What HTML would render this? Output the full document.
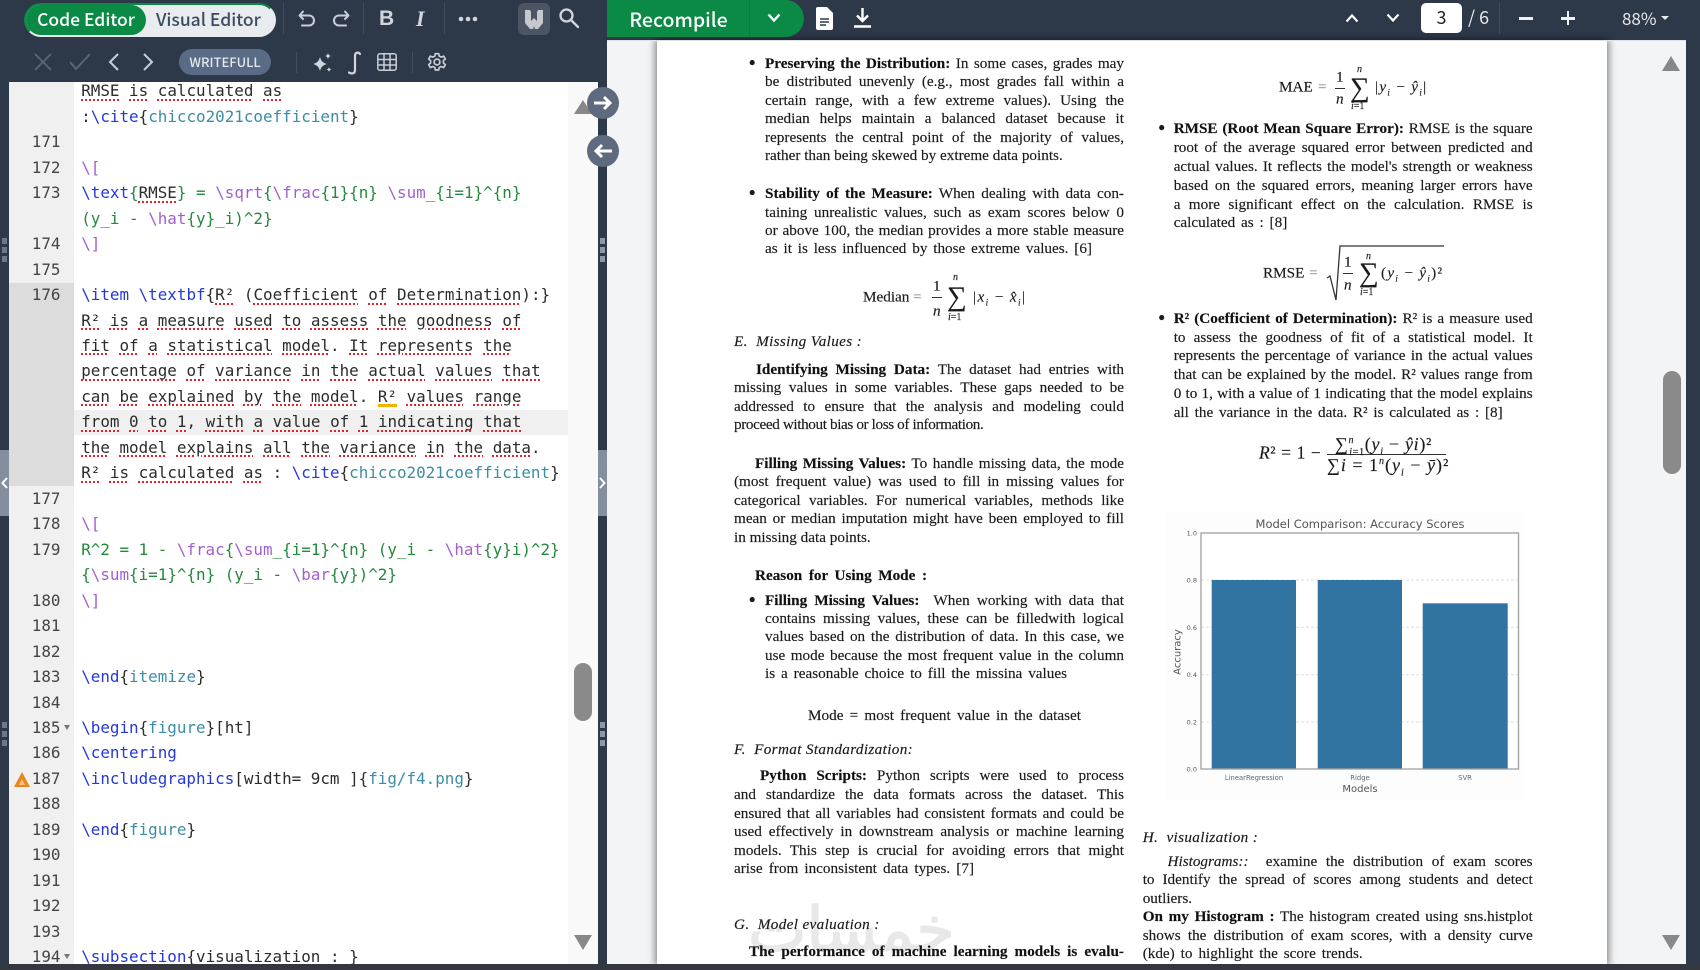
<!DOCTYPE html>
<html><head><meta charset="utf-8">
<style>
html,body{margin:0;padding:0;width:1700px;height:970px;overflow:hidden;background:#2d3849}
*{box-sizing:border-box}
.abs{position:absolute}
#root{position:absolute;left:0;top:0;width:1700px;height:970px;overflow:hidden;background:#2d3849;filter:blur(.35px)}
.ui{font-family:"Noto Sans CJK JP","Liberation Sans",sans-serif}
.ico{position:absolute;overflow:visible}
.sep{position:absolute;width:1px;background:#414d60}
#ed{position:absolute;left:9px;top:82px;width:589px;height:882px;background:#fff;overflow:hidden}
#gut{position:absolute;left:0;top:0;width:64.5px;height:882px;background:#f0f0f0}
#gact{position:absolute;left:0;top:201px;width:64.5px;height:203px;background:#dcdcdc}
#lact{position:absolute;left:65px;top:328px;width:494px;height:25px;background:#f0f0f0}
#trk{position:absolute;left:559px;top:0;width:30px;height:882px;background:#f9f9f9}
.rows{position:absolute;top:-3.73px;height:885.7px;overflow:hidden;font:15.9px/25.47px "DejaVu Sans Mono","Liberation Mono",monospace;color:#2c2c2c}
.rows div{height:25.47px;white-space:pre}
#nums{left:0;width:51.5px;text-align:right;color:#444}
#code{left:72.2px;width:490px}
.c{color:#2438dc}.a{color:#3c8da6}.m{color:#a35fcf}.g{color:#23893c}
.s{text-decoration:underline dotted #e5202a 2px;text-underline-offset:3px}
.y{text-decoration:underline solid #f0b400 3px;text-underline-offset:2px}
#pdf{position:absolute;left:607px;top:40px;width:1079px;height:924px;background:#f3f4f6;overflow:hidden}
#page{position:absolute;left:657px;top:41px;width:950px;height:923px;background:#fff;box-shadow:0 0 7px 2px rgba(0,0,0,.45)}
#txt{position:absolute;left:0;top:0;width:1700px;height:964px;overflow:hidden;font:15.2px/18px "Liberation Serif",serif;color:#1a1a1a;-webkit-text-stroke:.15px #1a1a1a}
#txt .j,#txt .n{position:absolute;transform:translateY(calc(-50% + 1px))}
#txt .e{position:absolute;transform:translateY(-50%)}
.j{text-align:justify;text-align-last:justify;height:18px;overflow:hidden}
.n{white-space:nowrap}
.e{white-space:nowrap;line-height:1}
.L{left:765px;width:359px}.F{left:734px;width:390px}.R{left:1173.7px;width:359px}.H{left:1142.7px;width:390px}
.t{font-style:italic;letter-spacing:.35px}
#txt i{font-style:italic}
#txt b{font-weight:bold;color:#111}
.sm{font-size:10px}
.sg{font-size:27.5px;font-family:"Liberation Serif",serif;line-height:1}
.dot{font-size:21px}
.bar{position:absolute;height:1px;background:#333}
.btn{position:absolute;border-radius:50%;background:#5e6a7d}
.tri{position:absolute;width:0;height:0;border-left:9.5px solid transparent;border-right:9.5px solid transparent}
sub.u{font-size:9px;line-height:0}
</style></head><body>
<div id="root">

<!-- toolbar left -->
<div class="abs" style="left:24px;top:3px;width:252px;height:34px;background:#e9ecef;border-radius:17px;border:2px solid #0b8a45;border-color:#0b8a45 #e9ecef #e9ecef #0b8a45"></div>
<div class="abs ui" style="left:26px;top:5px;width:120px;height:30px;background:#0b8a45;border-radius:15px;color:#fff;font-size:17.5px;font-weight:500;line-height:29px;text-align:center">Code Editor</div>
<div class="abs ui" style="left:156px;top:5px;color:#3d4b60;font-size:17.5px;font-weight:500;line-height:29px">Visual Editor</div>
<div class="sep" style="left:283px;top:3px;height:31px"></div>
<div class="sep" style="left:363px;top:3px;height:31px"></div>
<div class="sep" style="left:444px;top:3px;height:31px"></div>
<svg class="ico" style="left:297px;top:9px" width="20" height="20" viewBox="0 0 20 20" fill="none" stroke="#c9ced6" stroke-width="2" stroke-linecap="round" stroke-linejoin="round"><path d="M6 2.5 2.5 6.5 6 10M3 6.5h9a4.5 4.5 0 0 1 0 10H5"/></svg>
<svg class="ico" style="left:331px;top:9px" width="20" height="20" viewBox="0 0 20 20" fill="none" stroke="#c9ced6" stroke-width="2" stroke-linecap="round" stroke-linejoin="round"><path d="M14 2.5 17.5 6.5 14 10M17 6.5H8a4.5 4.5 0 0 0 0 10h7"/></svg>
<div class="abs" style="left:379px;top:4px;color:#d2d6dc;font:bold 21px/30px 'Liberation Sans',sans-serif">B</div>
<div class="abs" style="left:416px;top:4px;color:#d2d6dc;font:italic bold 22px/30px 'Liberation Serif',serif">I</div>
<svg class="ico" style="left:458px;top:15px" width="20" height="8" viewBox="0 0 20 8" fill="#d2d6dc"><circle cx="3" cy="4" r="2.3"/><circle cx="10" cy="4" r="2.3"/><circle cx="17" cy="4" r="2.3"/></svg>
<div class="abs" style="left:518px;top:3px;width:32px;height:32px;background:#4c5564;border-radius:6px"></div>
<svg class="ico" style="left:523px;top:8px" width="22" height="22" viewBox="0 0 22 22" fill="#c6c9ce"><path d="M2 2h5l1 2v9l3-3 3 3V4l1-2h5v13l-5 6h-3l-1-3-1 3H7l-5-6z"/></svg>
<svg class="ico" style="left:558px;top:7px" width="22" height="22" viewBox="0 0 22 22" fill="none" stroke="#d2d6dc" stroke-width="2.3" stroke-linecap="round"><circle cx="8.5" cy="8.5" r="6"/><path d="M13 13l7 7"/></svg>

<!-- row 2 -->
<svg class="ico" style="left:34px;top:53px" width="18" height="18" viewBox="0 0 18 18" fill="none" stroke="#5c6676" stroke-width="1.8"><path d="M1 1l16 16M17 1 1 17"/></svg>
<svg class="ico" style="left:69px;top:53px" width="22" height="18" viewBox="0 0 22 18" fill="none" stroke="#5c6676" stroke-width="1.8"><path d="M1 9l6 7L21 1"/></svg>
<svg class="ico" style="left:108px;top:53px" width="12" height="18" viewBox="0 0 12 18" fill="none" stroke="#c9ced6" stroke-width="2"><path d="M10 1 2 9l8 8"/></svg>
<svg class="ico" style="left:142px;top:53px" width="12" height="18" viewBox="0 0 12 18" fill="none" stroke="#c9ced6" stroke-width="2"><path d="M2 1l8 8-8 8"/></svg>
<div class="abs ui" style="left:179px;top:49px;width:92px;height:26px;background:#5a6b85;border-radius:13px;color:#e4e8ee;font-size:13px;line-height:26px;text-align:center;font-weight:500">WRITEFULL</div>
<div class="sep" style="left:296px;top:52px;height:21px"></div>
<svg class="ico" style="left:311px;top:52px" width="22" height="22" viewBox="0 0 22 22" fill="#d2d6dc"><path d="M9 5c1 4 3 6 7 7-4 1-6 3-7 7-1-4-3-6-7-7 4-1 6-3 7-7zM17 1c.4 1.7 1.3 2.6 3 3-1.7.4-2.6 1.3-3 3-.4-1.7-1.3-2.6-3-3 1.7-.4 2.6-1.3 3-3zM18 15c.3 1.4 1 2.1 2.5 2.5-1.5.4-2.2 1.1-2.5 2.5-.3-1.4-1-2.1-2.5-2.5 1.5-.4 2.2-1.1 2.5-2.5z"/></svg>
<svg class="ico" style="left:347px;top:51px" width="15" height="24" viewBox="0 0 15 24" fill="none" stroke="#d2d6dc" stroke-width="2.2" stroke-linecap="round"><path d="M13 3c-1.5-2-5-2-5 2v14c0 4-3.5 4-6 2.5"/></svg>
<svg class="ico" style="left:377px;top:53px" width="20" height="18" viewBox="0 0 20 18" fill="none" stroke="#c9ced6" stroke-width="1.5"><rect x=".8" y=".8" width="18.4" height="16.4" rx="2"/><path d="M7 1v16M13 1v16M1 6.5h18M1 12h18"/></svg>
<div class="sep" style="left:412px;top:52px;height:21px"></div>
<svg class="ico" style="left:427px;top:52px" width="20" height="20" viewBox="0 0 24 24" fill="none" stroke="#c9ced6" stroke-width="2"><circle cx="12" cy="12" r="3.5"/><path d="M10 2h4l.7 3 2.5 1.2 2.8-1.3 2 3.5-2.3 2v2.8l2.3 2-2 3.5-2.8-1.3-2.5 1.2-.7 3h-4l-.7-3-2.5-1.2L4 18.700l-2-3.500 2.300-2v-2.800L2 8.400l2-3.500 2.800 1.300L9.300 5z" stroke-linejoin="round"/></svg>

<!-- editor -->
<div id="ed">
<div id="trk"></div>
<div id="gut"></div><div id="gact"></div><div id="lact"></div>
<div class="rows" id="nums"><div> </div><div> </div><div>171</div><div>172</div><div>173</div><div> </div><div>174</div><div>175</div><div>176</div><div> </div><div> </div><div> </div><div> </div><div> </div><div> </div><div> </div><div>177</div><div>178</div><div>179</div><div> </div><div>180</div><div>181</div><div>182</div><div>183</div><div>184</div><div>185</div><div>186</div><div>187</div><div>188</div><div>189</div><div>190</div><div>191</div><div>192</div><div>193</div><div>194</div></div>
<div class="rows" id="code">
<div><span class="s">RMSE</span> <span class="s">is</span> <span class="s">calculated</span> <span class="s">as</span></div>
<div>:<span class="c">\cite</span>{<span class="a">chicco2021coefficient</span>}</div>
<div> </div>
<div><span class="m">\[</span></div>
<div><span class="c">\text</span><span class="g">{</span><span class="s">RMSE</span><span class="g">}</span> <span class="g">=</span> <span class="m">\sqrt</span><span class="g">{</span><span class="m">\frac</span><span class="g">{1}{n}</span> <span class="m">\sum</span><span class="g">_{i=1}^{n}</span></div>
<div><span class="g">(y_i - </span><span class="m">\hat</span><span class="g">{y}_i)^2}</span></div>
<div><span class="m">\]</span></div>
<div> </div>
<div><span class="c">\item</span> <span class="c">\textbf</span>{<span class="s">R²</span> (<span class="s">Coefficient</span> <span class="s">of</span> <span class="s">Determination</span>):}</div>
<div><span class="s">R²</span> <span class="s">is</span> <span class="s">a</span> <span class="s">measure</span> <span class="s">used</span> <span class="s">to</span> <span class="s">assess</span> <span class="s">the</span> <span class="s">goodness</span> <span class="s">of</span></div>
<div><span class="s">fit</span> <span class="s">of</span> <span class="s">a</span> <span class="s">statistical</span> <span class="s">model</span>. <span class="s">It</span> <span class="s">represents</span> <span class="s">the</span></div>
<div><span class="s">percentage</span> <span class="s">of</span> <span class="s">variance</span> <span class="s">in</span> <span class="s">the</span> <span class="s">actual</span> <span class="s">values</span> <span class="s">that</span></div>
<div><span class="s">can</span> <span class="s">be</span> <span class="s">explained</span> <span class="s">by</span> <span class="s">the</span> <span class="s">model</span>. <span class="y">R²</span> <span class="s">values</span> <span class="s">range</span></div>
<div><span class="s">from</span> <span class="s">0</span> <span class="s">to</span> <span class="s">1</span>, <span class="s">with</span> <span class="s">a</span> <span class="s">value</span> <span class="s">of</span> <span class="s">1</span> <span class="s">indicating</span> <span class="s">that</span></div>
<div><span class="s">the</span> <span class="s">model</span> <span class="s">explains</span> <span class="s">all</span> <span class="s">the</span> <span class="s">variance</span> <span class="s">in</span> <span class="s">the</span> <span class="s">data</span>.</div>
<div><span class="s">R²</span> <span class="s">is</span> <span class="s">calculated</span> <span class="s">as</span> : <span class="c">\cite</span>{<span class="a">chicco2021coefficient</span>}</div>
<div> </div>
<div><span class="m">\[</span></div>
<div><span class="g">R^2 = 1 - </span><span class="m">\frac</span><span class="g">{</span><span class="m">\sum</span><span class="g">_{i=1}^{n} (y_i - </span><span class="m">\hat</span><span class="g">{y}i)^2}</span></div>
<div><span class="g">{</span><span class="m">\sum</span><span class="g">{i=1}^{n} (y_i - </span><span class="m">\bar</span><span class="g">{y})^2}</span></div>
<div><span class="m">\]</span></div>
<div> </div>
<div> </div>
<div><span class="c">\end</span>{<span class="a">itemize</span>}</div>
<div> </div>
<div><span class="c">\begin</span>{<span class="a">figure</span>}[ht]</div>
<div><span class="c">\centering</span></div>
<div><span class="c">\includegraphics</span>[width= 9cm ]{<span class="a">fig/f4.png</span>}</div>
<div> </div>
<div><span class="c">\end</span>{<span class="a">figure</span>}</div>
<div> </div>
<div> </div>
<div> </div>
<div> </div>
<div><span class="c">\subsection</span>{visualization : }</div>
</div>
<!-- fold marks -->
<div class="abs" style="left:55px;top:643px;border-left:3px solid transparent;border-right:3px solid transparent;border-top:5px solid #777"></div>
<div class="abs" style="left:55px;top:872px;border-left:3px solid transparent;border-right:3px solid transparent;border-top:5px solid #777"></div>
<svg class="ico" style="left:5px;top:690px" width="16" height="15" viewBox="0 0 16 15"><path d="M8 0 16 15H0z" fill="#e8871e"/><path d="M8 7l3 6H5z" fill="#f5c37f"/></svg>
<!-- editor scrollbar -->
<div class="tri" style="left:564.5px;top:18px;border-bottom:14px solid #888"></div>
<div class="abs" style="left:565px;top:581px;width:18px;height:58px;background:#8a8a8a;border-radius:9px"></div>
<div class="tri" style="left:564.5px;top:853px;border-top:15px solid #888"></div>
</div>

<!-- collapse bars -->
<div class="abs" style="left:0;top:450px;width:9px;height:66px;background:#848e9c"></div>
<div class="abs" style="left:598px;top:450px;width:9px;height:66px;background:#848e9c"></div>
<svg class="ico" style="left:1px;top:477px" width="7" height="12" viewBox="0 0 7 12" fill="none" stroke="#fff" stroke-width="2"><path d="M6 1 1.5 6 6 11"/></svg>
<svg class="ico" style="left:599px;top:477px" width="7" height="12" viewBox="0 0 7 12" fill="none" stroke="#fff" stroke-width="2"><path d="M1 1l4.5 5L1 11"/></svg>
<!-- handles -->
<svg class="ico" style="left:2px;top:238px" width="6" height="28" fill="#6d7888"><rect width="5" height="6"/><rect y="9" width="5" height="6"/><rect y="18" width="5" height="6"/></svg>
<svg class="ico" style="left:600px;top:238px" width="6" height="28" fill="#8d97a6"><rect width="5" height="6"/><rect y="9" width="5" height="6"/><rect y="18" width="5" height="6"/></svg>
<svg class="ico" style="left:2px;top:722px" width="6" height="28" fill="#6d7888"><rect width="5" height="6"/><rect y="9" width="5" height="6"/><rect y="18" width="5" height="6"/></svg>
<svg class="ico" style="left:600px;top:722px" width="6" height="28" fill="#8d97a6"><rect width="5" height="6"/><rect y="9" width="5" height="6"/><rect y="18" width="5" height="6"/></svg>

<!-- pdf -->
<div id="pdf"></div>
<div id="page"></div>
<div class="abs" style="left:607px;top:40px;width:1079px;height:1px;background:#dfe1e4"></div>
<!-- recompile -->
<div class="abs" style="left:607px;top:0;width:197px;height:37px;background:#0b8a45;border-radius:0 19px 19px 0"></div>
<div class="abs" style="left:749px;top:0;width:1px;height:37px;background:#0a7a3d"></div>
<div class="abs ui" style="left:607px;top:0;width:143px;text-align:center;color:#fff;font-size:19.5px;font-weight:500;line-height:37px">Recompile</div>
<svg class="ico" style="left:767px;top:13px" width="14" height="10" viewBox="0 0 14 10" fill="none" stroke="#fff" stroke-width="2.4"><path d="M1.5 1.5 7 7.5l5.5-6"/></svg>
<svg class="ico" style="left:816px;top:7px" width="17" height="23" viewBox="0 0 17 23"><path d="M2 0h9l6 6v15a2 2 0 0 1-2 2H2a2 2 0 0 1-2-2V2a2 2 0 0 1 2-2z" fill="#fff"/><path d="M4 12h9M4 15h9M4 18h6" stroke="#2d3849" stroke-width="1.5"/></svg>
<svg class="ico" style="left:853px;top:8px" width="19" height="20" viewBox="0 0 19 20" fill="none" stroke="#fff" stroke-width="2.4"><path d="M9.5 0v12M4 7.5l5.5 5.5L15 7.5M1 18.5h17"/></svg>
<svg class="ico" style="left:1345px;top:13px" width="14" height="10" viewBox="0 0 14 10" fill="none" stroke="#fff" stroke-width="2.2"><path d="M1.5 8.5 7 2.5l5.5 6"/></svg>
<svg class="ico" style="left:1386px;top:13px" width="14" height="10" viewBox="0 0 14 10" fill="none" stroke="#fff" stroke-width="2.2"><path d="M1.5 1.5 7 7.5l5.5-6"/></svg>
<div class="abs ui" style="left:1421px;top:3px;width:41px;height:30px;background:#fff;border-radius:5px;color:#222;font-size:18px;line-height:29px;text-align:center">3</div>
<div class="abs ui" style="left:1468px;top:3px;color:#e8eaee;font-size:18px;line-height:29px">/ 6</div>
<div class="sep" style="left:1499px;top:3px;height:31px"></div>
<div class="abs" style="left:1519px;top:17px;width:14px;height:2.5px;background:#f0f0f0"></div>
<div class="abs" style="left:1561px;top:17px;width:14px;height:2.5px;background:#f0f0f0"></div>
<div class="abs" style="left:1566.8px;top:11px;width:2.5px;height:14px;background:#f0f0f0"></div>
<div class="abs ui" style="left:1622px;top:3px;color:#e8eaee;font-size:17px;line-height:30px">88%</div>
<div class="abs" style="left:1661px;top:16px;border-left:4px solid transparent;border-right:4px solid transparent;border-top:4.5px solid #e8eaee"></div>

<!-- pdf text -->
<div id="txt">
<div class="abs" style="left:748px;top:895px;font:62px/70px 'DejaVu Sans',sans-serif;color:#e8e8e8;-webkit-text-stroke:1.5px #e8e8e8;white-space:nowrap">خمسات</div>

<div class="e dot" style="left:748.5px;top:62.7px">•</div>
<div class="j L" style="top:62.7px"><b>Preserving the Distribution:</b> In some cases, grades may</div>
<div class="j L" style="top:81.3px">be distributed unevenly (e.g., most grades fall within a</div>
<div class="j L" style="top:100px">certain range, with a few extreme values). Using the</div>
<div class="j L" style="top:118.3px">median helps maintain a balanced dataset because it</div>
<div class="j L" style="top:136.7px">represents the central point of the majority of values,</div>
<div class="n" style="left:765px;top:155px">rather than being skewed by extreme data points.</div>

<div class="e dot" style="left:748.5px;top:192.7px">•</div>
<div class="j L" style="top:192.7px"><b>Stability of the Measure:</b> When dealing with data con-</div>
<div class="j L" style="top:211.7px">taining unrealistic values, such as exam scores below 0</div>
<div class="j L" style="top:230px">or above 100, the median provides a more stable measure</div>
<div class="j" style="left:765px;width:327px;top:248.3px">as it is less influenced by those extreme values. [6]</div>

<div class="e" style="left:863px;top:296.7px">Median</div><div class="e" style="left:913px;top:296.7px;color:#777;-webkit-text-stroke:0">=</div>
<div class="e" style="left:933px;top:285.7px">1</div><div class="bar" style="left:932px;top:296.5px;width:10px"></div><div class="e" style="left:933px;top:311px"><i>n</i></div>
<div class="e sg" style="left:947px;top:296px">∑</div><div class="e sm" style="left:953px;top:278px"><i>n</i></div><div class="e sm" style="left:948px;top:318px"><i>i</i>=1</div>
<div class="e" style="left:973px;top:296.7px;letter-spacing:1.4px">|<i>x<sub class="u">i</sub></i> − <i>x̂<sub class="u">i</sub></i>|</div>

<div class="n t" style="left:734px;top:341px">E.&nbsp; Missing Values :</div>

<div class="j" style="left:756px;width:368px;top:368.6px"><b>Identifying Missing Data:</b> The dataset had entries with</div>
<div class="j F" style="top:387px">missing values in some variables. These gaps needed to be</div>
<div class="j F" style="top:405.5px">addressed to ensure that the analysis and modeling could</div>
<div class="n" style="left:734px;top:424px;letter-spacing:-.38px">proceed without bias or loss of information.</div>

<div class="j" style="left:755px;width:369px;top:463px"><b>Filling Missing Values:</b> To handle missing data, the mode</div>
<div class="j F" style="top:481.4px">(most frequent value) was used to fill in missing values for</div>
<div class="j F" style="top:499.8px">categorical variables. For numerical variables, methods like</div>
<div class="j F" style="top:518px">mean or median imputation might have been employed to fill</div>
<div class="n" style="left:734px;top:536.7px">in missing data points.</div>

<div class="j" style="left:755px;width:172px;top:574.6px"><b>Reason for Using Mode :</b></div>

<div class="e dot" style="left:748.5px;top:599.5px">•</div>
<div class="j L" style="top:599.5px"><b>Filling Missing Values:</b>&nbsp; When working with data that</div>
<div class="j L" style="top:618px">contains missing values, these can be filledwith logical</div>
<div class="j L" style="top:636.4px">values based on the distribution of data. In this case, we</div>
<div class="j L" style="top:654.8px">use mode because the most frequent value in the column</div>
<div class="j" style="left:765px;width:302px;top:673px">is a reasonable choice to fill the missina values</div>

<div class="j" style="left:808px;width:273px;top:714.5px">Mode = most frequent value in the dataset</div>

<div class="n t" style="left:734px;top:749px">F.&nbsp; Format Standardization:</div>

<div class="j" style="left:760px;width:364px;top:775px"><b>Python Scripts:</b> Python scripts were used to process</div>
<div class="j F" style="top:794.3px">and standardize the data formats across the dataset. This</div>
<div class="j F" style="top:812.7px">ensured that all variables had consistent formats and could be</div>
<div class="j F" style="top:831.3px">used effectively in downstream analysis or machine learning</div>
<div class="j F" style="top:850px">models. This step is crucial for avoiding errors that might</div>
<div class="j" style="left:734px;width:240px;top:868.3px">arise from inconsistent data types. [7]</div>

<div class="n t" style="left:734px;top:924.3px">G.&nbsp; Model evaluation :</div>
<div class="j" style="left:749px;width:375px;top:950.7px"><b>The performance of machine learning models is evalu-</b></div>

<!-- right col -->
<div class="e" style="left:1279px;top:87px">MAE</div><div class="e" style="left:1318px;top:87px;color:#777;-webkit-text-stroke:0">=</div>
<div class="e" style="left:1336px;top:77px">1</div><div class="bar" style="left:1335px;top:87.5px;width:10px"></div><div class="e" style="left:1336px;top:99px"><i>n</i></div>
<div class="e sg" style="left:1350px;top:87px">∑</div><div class="e sm" style="left:1357px;top:70px"><i>n</i></div><div class="e sm" style="left:1351px;top:107px"><i>i</i>=1</div>
<div class="e" style="left:1375px;top:87px;letter-spacing:1.3px">|<i>y<sub class="u">i</sub></i> − <i>ŷ<sub class="u">i</sub></i>|</div>

<div class="e dot" style="left:1158px;top:128.3px">•</div>
<div class="j R" style="top:128.3px"><b>RMSE (Root Mean Square Error):</b> RMSE is the square</div>
<div class="j R" style="top:147.3px">root of the average squared error between predicted and</div>
<div class="j R" style="top:166px">actual values. It reflects the model's strength or weakness</div>
<div class="j R" style="top:185px">based on the squared errors, meaning larger errors have</div>
<div class="j R" style="top:203.7px">a more significant effect on the calculation. RMSE is</div>
<div class="j" style="left:1173.7px;width:113.6px;top:222.3px">calculated as : [8]</div>

<div class="e" style="left:1263px;top:272.7px">RMSE</div><div class="e" style="left:1309px;top:272.7px;color:#777;-webkit-text-stroke:0">=</div>
<svg class="ico" style="left:1326px;top:244px" width="120" height="60" viewBox="0 0 120 60" fill="none" stroke="#333"><path d="M1 34l3-2 6 24 4-54h104" stroke-width="1.3"/></svg>
<div class="e" style="left:1344px;top:261.7px">1</div><div class="bar" style="left:1343px;top:273px;width:10px"></div><div class="e" style="left:1344px;top:285px"><i>n</i></div>
<div class="e sg" style="left:1359px;top:272px">∑</div><div class="e sm" style="left:1366px;top:256.7px"><i>n</i></div><div class="e sm" style="left:1360px;top:293px"><i>i</i>=1</div>
<div class="e" style="left:1381px;top:272.7px;letter-spacing:1.3px">(<i>y<sub class="u">i</sub></i> − <i>ŷ<sub class="u">i</sub></i>)²</div>

<div class="e dot" style="left:1158px;top:318.3px">•</div>
<div class="j R" style="top:318.3px"><b>R² (Coefficient of Determination):</b> R² is a measure used</div>
<div class="j R" style="top:337.3px">to assess the goodness of fit of a statistical model. It</div>
<div class="j R" style="top:354.5px">represents the percentage of variance in the actual values</div>
<div class="j R" style="top:374px">that can be explained by the model. R² values range from</div>
<div class="j R" style="top:392.5px">0 to 1, with a value of 1 indicating that the model explains</div>
<div class="j" style="left:1173.7px;width:329px;top:412px">all the variance in the data. R² is calculated as : [8]</div>

<div class="e" style="left:1259px;top:453px;font-size:17.5px;letter-spacing:.6px"><i>R</i>² = 1 −</div>
<div class="bar" style="left:1327px;top:454px;width:119px"></div>
<div class="e" style="left:1335px;top:444px;font-size:18px;letter-spacing:.7px">∑<sup style="font-size:10px;line-height:0"><i>n</i></sup><sub style="font-size:10px;line-height:0;margin-left:-5px"><i>i</i>=1</sub>(<i>y<sub style="font-size:10px;line-height:0">i</sub></i> − <i>ŷi</i>)²</div>
<div class="e" style="left:1327px;top:465px;font-size:18px;letter-spacing:1px">∑<i>i</i> = 1<sup style="font-size:10px;line-height:0"><i>n</i></sup>(<i>y<sub style="font-size:10px;line-height:0">i</sub></i> − <i>ȳ</i>)²</div>

<svg class="ico" style="left:1166px;top:513px;-webkit-text-stroke:0" width="358" height="286" viewBox="1166 513 358 286" font-family="DejaVu Sans,sans-serif">
<rect x="1166" y="513" width="358" height="286" fill="#fdfdfd"/>
<rect x="1201" y="533" width="317.5" height="236" fill="#fff"/>
<g stroke="#dddddd" stroke-width="1" stroke-dasharray="3 2"><path d="M1201 580h317M1201 627.3h317M1201 674.7h317M1201 722h317"/></g>
<g fill="#3274a1"><rect x="1211.7" y="580" width="84.3" height="189"/><rect x="1317.7" y="580" width="84.3" height="189"/><rect x="1422.7" y="603.3" width="85" height="165.7"/></g>
<rect x="1201" y="533" width="317.5" height="236" fill="none" stroke="#a0a0a0" stroke-width="1.3"/>
<text x="1360" y="528" font-size="11.5" fill="#555" text-anchor="middle">Model Comparison: Accuracy Scores</text>
<g font-size="6.5" fill="#555" text-anchor="end"><text x="1197" y="535.5">1.0</text><text x="1197" y="582.5">0.8</text><text x="1197" y="630">0.6</text><text x="1197" y="677">0.4</text><text x="1197" y="724.5">0.2</text><text x="1197" y="771.5">0.0</text></g>
<g font-size="6.8" fill="#666" text-anchor="middle"><text x="1254" y="780">LinearRegression</text><text x="1360" y="780">Ridge</text><text x="1465" y="780">SVR</text></g>
<text x="1360" y="792" font-size="10" fill="#555" text-anchor="middle">Models</text>
<text transform="translate(1180.5 652) rotate(-90)" font-size="10" fill="#555" text-anchor="middle">Accuracy</text>
</svg>

<div class="n t" style="left:1142.7px;top:836.7px">H.&nbsp; visualization :</div>
<div class="j" style="left:1167.5px;width:365px;top:861px"><i>Histograms::</i>&nbsp; examine the distribution of exam scores</div>
<div class="j H" style="top:879.3px">to Identify the spread of scores among students and detect</div>
<div class="n" style="left:1142.7px;top:897.7px">outliers.</div>
<div class="j H" style="top:916px"><b>On my Histogram :</b> The histogram created using sns.histplot</div>
<div class="j H" style="top:934.7px">shows the distribution of exam scores, with a density curve</div>
<div class="j" style="left:1142.7px;width:220px;top:953.3px">(kde) to highlight the score trends.</div>
</div>

<!-- pdf scrollbar -->
<div class="tri" style="left:1662px;top:56px;border-bottom:15px solid #888"></div>
<div class="abs" style="left:1663px;top:371px;width:18px;height:103px;background:#8a8a8a;border-radius:9px"></div>
<div class="tri" style="left:1662px;top:935px;border-top:15px solid #888"></div>

<!-- round buttons -->
<div class="btn" style="left:587px;top:87px;width:32px;height:32px"></div>
<div class="btn" style="left:587px;top:135px;width:32px;height:32px"></div>
<svg class="ico" style="left:593px;top:95px" width="20" height="16" viewBox="0 0 20 16" fill="none" stroke="#fff" stroke-width="3"><path d="M1 8h16M11 2l6 6-6 6"/></svg>
<svg class="ico" style="left:593px;top:143px" width="20" height="16" viewBox="0 0 20 16" fill="none" stroke="#fff" stroke-width="3"><path d="M19 8H3M9 2 3 8l6 6"/></svg>

<!-- bottom bar -->
<div class="abs" style="left:0;top:964px;width:1700px;height:6px;background:#34383e"></div>
</div>
</body></html>
